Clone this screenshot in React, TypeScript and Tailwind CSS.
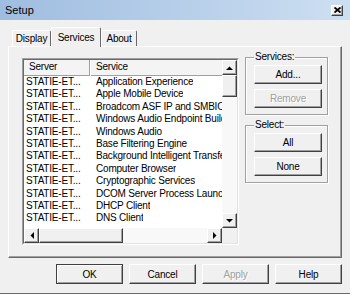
import type { ReactNode } from "react";

const services = [
  "Application Experience",
  "Apple Mobile Device",
  "Broadcom ASF IP and SMBIOS Mailbox Monitor",
  "Windows Audio Endpoint Builder",
  "Windows Audio",
  "Base Filtering Engine",
  "Background Intelligent Transfer Service",
  "Computer Browser",
  "Cryptographic Services",
  "DCOM Server Process Launcher",
  "DHCP Client",
  "DNS Client",
];

const raised =
  "border border-t-white border-l-white border-r-[#404040] border-b-[#404040] shadow-[inset_-1px_-1px_0_#a0a0a0]";

function Button({
  children,
  disabled,
  isDefault,
  className = "",
}: {
  children: ReactNode;
  disabled?: boolean;
  isDefault?: boolean;
  className?: string;
}) {
  return (
    <div
      className={`flex items-center justify-center bg-[#f0f0f0] ${
        isDefault
          ? "border border-[#404040] shadow-[inset_1px_1px_0_#fff,inset_-1px_-1px_0_#a0a0a0]"
          : raised
      } ${
        disabled ? "text-[#a0a0a0] [text-shadow:1px_1px_0_#fff]" : "text-black"
      } ${className}`}
    >
      {children}
    </div>
  );
}

function Arrow({ dir }: { dir: "up" | "down" | "left" | "right" }) {
  const points = {
    up: "0,4 3.5,0.5 7,4",
    down: "0,0 7,0 3.5,3.5",
    left: "4,0 4,7 0.5,3.5",
    right: "0,0 0,7 3.5,3.5",
  }[dir];
  const vertical = dir === "up" || dir === "down";
  return (
    <div className={`flex h-[15px] w-[15px] shrink-0 items-center justify-center bg-[#f0f0f0] ${raised}`}>
      <svg width={vertical ? 7 : 4} height={vertical ? 4 : 7} viewBox={vertical ? "0 0 7 4" : "0 0 4 7"}>
        <polygon points={points} fill="#000" />
      </svg>
    </div>
  );
}

function Group({ label, children }: { label: string; children: ReactNode }) {
  return (
    <fieldset className="flex flex-col gap-[5px] border border-[#a0a0a0] pb-[6px] pl-[8px] pt-[2px] shadow-[1px_1px_0_#fff,inset_1px_1px_0_#fff]">
      <legend className="bg-[#f0f0f0] px-[1px] leading-[12px]">{label}</legend>
      {children}
    </fieldset>
  );
}

export default function App() {
  return (
    <div className="flex h-[294px] w-[350px] flex-col border-b border-b-[#696969] bg-[#f0f0f0] font-[family-name:Liberation_Sans,sans-serif] text-[10px] tracking-[-0.2px] text-black">
      <div className="flex h-[20px] shrink-0 items-center justify-between bg-gradient-to-r from-[#9fbde0] to-[#cddff2] pl-[5px] pr-[7px]">
        <span className="text-[11px] tracking-normal">Setup</span>
        <div className={`flex h-[11px] w-[12px] items-center justify-center bg-[#f0f0f0] ${raised}`}>
          <svg width="7" height="6" viewBox="0 0 7 6">
            <path d="M0.5 0.5 L6.5 5.5 M6.5 0.5 L0.5 5.5" stroke="#000" strokeWidth="1.8" />
          </svg>
        </div>
      </div>

      <div className="flex flex-col px-[8px]">
        <div className="flex h-[26px] items-end pl-[4px]">
          <div className="flex h-[16px] w-[39px] items-center justify-center rounded-t-[2px] border border-b-0 border-t-white border-l-white border-r-[#696969]">
            Display
          </div>
          <div className="relative z-10 -mb-px flex h-[20px] w-[50px] items-start justify-center rounded-t-[2px] border border-b-0 border-t-white border-l-white border-r-[#696969] bg-[#f0f0f0] pt-[2px]">
            Services
          </div>
          <div className="flex h-[16px] w-[36px] items-center justify-center rounded-t-[2px] border border-b-0 border-t-white border-l-white border-r-[#696969]">
            About
          </div>
        </div>

        <div className="flex h-[212px] items-start gap-[6px] border border-t-white border-l-white border-r-[#696969] border-b-[#696969] pl-[13px] pt-[4px] shadow-[inset_-1px_-1px_0_#a0a0a0]">
          <div className="mt-[7px] border border-t-[#a0a0a0] border-l-[#a0a0a0] border-r-white border-b-white">
            <div className="grid h-[185px] w-[215px] grid-cols-[198px_15px] grid-rows-[168px_15px] border border-t-[#696969] border-l-[#696969] border-r-[#e3e3e3] border-b-[#e3e3e3] bg-white">
              <div className="overflow-hidden">
                <div className="flex h-[16px] bg-[#f4f4f4] shadow-[inset_0_-1px_0_#a0a0a0]">
                  <div className="w-[66px] border-r border-r-[#a0a0a0] pl-[5px] leading-[13px]">Server</div>
                  <div className="flex-1 pl-[6px] leading-[13px] shadow-[inset_1px_0_0_#fff]">Service</div>
                </div>
                {services.map((s) => (
                  <div key={s} className="flex h-[12.4px] whitespace-nowrap leading-[12.4px]">
                    <div className="w-[66px] shrink-0 pl-[2px]">STATIE-ET...</div>
                    <div className="overflow-hidden pl-[6px]">{s}</div>
                  </div>
                ))}
              </div>
              <div className="flex flex-col bg-[#f8f8f8]">
                <Arrow dir="up" />
                <div className={`h-[22px] bg-[#f0f0f0] ${raised}`} />
                <div className="flex-1" />
                <Arrow dir="down" />
              </div>
              <div className="flex bg-[#f8f8f8]">
                <Arrow dir="left" />
                <div className={`w-[84px] bg-[#f0f0f0] ${raised}`} />
                <div className="flex-1" />
                <Arrow dir="right" />
              </div>
              <div className="bg-[#f0f0f0]" />
            </div>
          </div>

          <div className="flex w-[83px] flex-col gap-[4px]">
            <Group label="Services:">
              <Button className="h-[19px] w-[68px]">Add...</Button>
              <Button className="h-[19px] w-[68px]" disabled>
                Remove
              </Button>
            </Group>
            <Group label="Select:">
              <Button className="h-[19px] w-[68px]">All</Button>
              <Button className="h-[19px] w-[68px]">None</Button>
            </Group>
          </div>
        </div>

        <div className="mt-[6px] flex justify-end gap-[6px]">
          <Button isDefault className="h-[20px] w-[67px]">
            OK
          </Button>
          <Button className="h-[20px] w-[67px]">Cancel</Button>
          <Button disabled className="h-[20px] w-[67px]">
            Apply
          </Button>
          <Button className="h-[20px] w-[67px]">Help</Button>
        </div>
      </div>
    </div>
  );
}
